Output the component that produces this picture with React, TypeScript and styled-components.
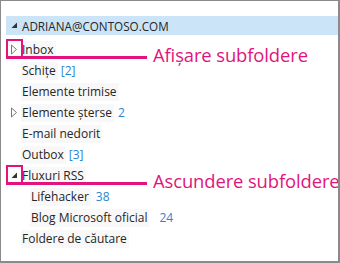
import React from "react";
import styled, { createGlobalStyle } from "styled-components";

const GlobalStyle = createGlobalStyle`
  html, body { margin: 0; padding: 0; background: #ffffff; }
  body { font-family: "Open Sans", "Noto Sans", sans-serif; }
`;

const MAGENTA = "#e2137d";

type Folder = {
  name: string;
  count?: string;
  countGap?: number;
  level: 0 | 1;
  expander?: "closed" | "open";
  callout?: string;
};

const folders: Folder[] = [
  { name: "Inbox", level: 0, expander: "closed", callout: "Afișare subfoldere" },
  { name: "Schițe", count: "[2]", countGap: 3, level: 0 },
  { name: "Elemente trimise", level: 0 },
  { name: "Elemente șterse", count: "2", countGap: 4, level: 0, expander: "closed" },
  { name: "E-mail nedorit", level: 0 },
  { name: "Outbox", count: "[3]", countGap: 3, level: 0 },
  { name: "Fluxuri RSS", level: 0, expander: "open", callout: "Ascundere subfoldere" },
  { name: "Lifehacker", count: "38", countGap: 5, level: 1 },
  { name: "Blog Microsoft oficial", count: "24", countGap: 10, level: 1 },
  { name: "Foldere de căutare", level: 0 },
];

const Frame = styled.div`
  box-sizing: border-box;
  width: 340px;
  height: 263px;
  border: 1px solid #8a8a8a;
  border-right-width: 2px;
  border-bottom-width: 2px;
  padding-top: 15px;
  overflow: hidden;
  color: #262626;
`;

const AccountBar = styled.div`
  display: flex;
  align-items: center;
  height: 19px;
  margin-left: 5px;
  background: #cce4f7;
  font-size: 11.7px;
`;

const Slot = styled.span`
  display: flex;
  align-items: center;
  justify-content: center;
  width: 16px;
  flex: none;
`;

const FolderList = styled.div`
  padding-top: 4px;
`;

const Row = styled.div<{ $level: number }>`
  position: relative;
  display: flex;
  align-items: center;
  height: 21px;
  padding-left: ${(p) => 5 + p.$level * 9}px;
  font-size: 12px;
`;

const Label = styled.span`
  background: #f8f8f8;
  padding: 0 2px 1px 1px;
  margin-left: -1px;
  white-space: nowrap;
`;

const Count = styled.span<{ $gap: number }>`
  color: #2a86d1;
  margin-left: ${(p) => p.$gap}px;
`;

const CalloutBox = styled.span`
  position: absolute;
  left: 5px;
  top: 0;
  width: 17px;
  height: 20px;
  box-sizing: border-box;
  border: 2px solid ${MAGENTA};
  border-bottom-width: 3px;
`;

const CalloutLine = styled.span`
  position: absolute;
  left: 20px;
  top: 17px;
  width: 126px;
  height: 3px;
  background: ${MAGENTA};
`;

const CalloutText = styled.span`
  position: absolute;
  left: 152px;
  top: 3px;
  font-family: "Open Sans", "Noto Sans", sans-serif;
  font-size: 18.4px;
  color: ${MAGENTA};
  white-space: nowrap;
  letter-spacing: -0.1px;
`;

function ClosedArrow() {
  return (
    <svg width="8" height="11" viewBox="0 0 8 11">
      <path d="M1.5 1 L6.5 5.5 L1.5 10 Z" fill="none" stroke="#7a7a7a" strokeWidth="1" />
    </svg>
  );
}

function OpenArrow() {
  return (
    <svg width="7" height="7" viewBox="0 0 7 7">
      <path d="M6 0.5 L6 6 L0.5 6 Z" fill="#333333" />
    </svg>
  );
}

function FolderRow({ folder }: { folder: Folder }) {
  return (
    <Row $level={folder.level}>
      <Slot>
        {folder.expander === "closed" && <ClosedArrow />}
        {folder.expander === "open" && <OpenArrow />}
      </Slot>
      <Label>{folder.name}</Label>
      {folder.count && <Count $gap={folder.countGap ?? 4}>{folder.count}</Count>}
      {folder.callout && (
        <>
          <CalloutBox />
          <CalloutLine />
          <CalloutText>{folder.callout}</CalloutText>
        </>
      )}
    </Row>
  );
}

export default function App() {
  return (
    <>
      <GlobalStyle />
      <Frame>
        <AccountBar>
          <Slot>
            <OpenArrow />
          </Slot>
          ADRIANA@CONTOSO.COM
        </AccountBar>
        <FolderList>
          {folders.map((f) => (
            <FolderRow key={f.name} folder={f} />
          ))}
        </FolderList>
      </Frame>
    </>
  );
}
